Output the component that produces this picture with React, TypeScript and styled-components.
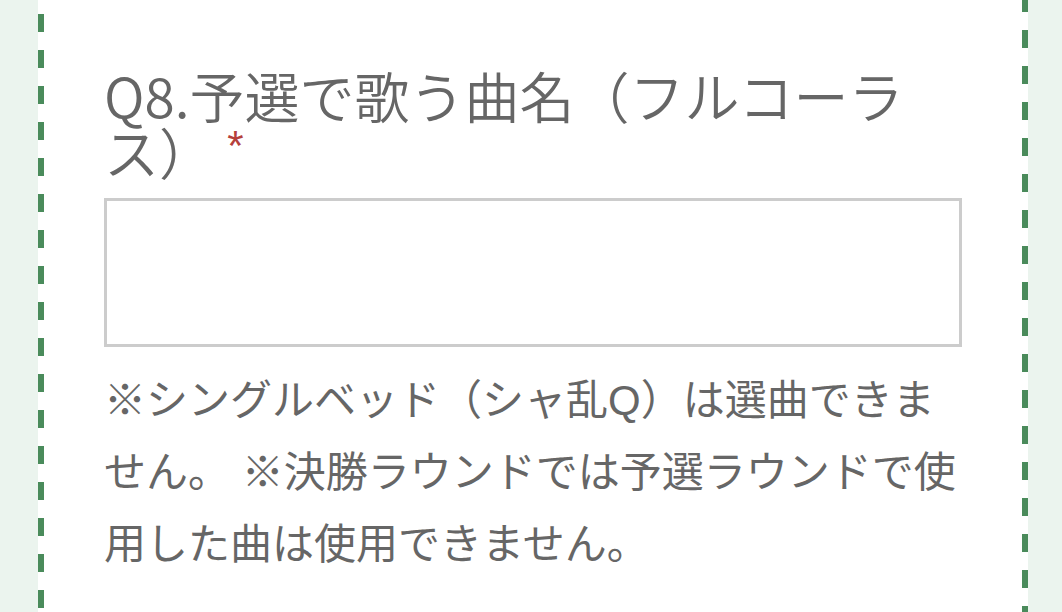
import React from "react";
import styled, { createGlobalStyle } from "styled-components";

const GlobalStyle = createGlobalStyle`
  html, body {
    margin: 0;
    padding: 0;
    background: #ffffff;
  }
  body {
    font-family: "Liberation Sans", "Noto Sans CJK JP", sans-serif;
    -webkit-font-smoothing: antialiased;
  }
`;

const Page = styled.div`
  display: flex;
  width: 1062px;
  height: 612px;
  overflow: hidden;
  background: #ffffff;
`;

const Gutter = styled.div<{ $width: number }>`
  flex: 0 0 ${(p) => p.$width}px;
  background: #ebf4ee;
`;

/* vertical dashed rule drawn as a repeating gradient so the dash phase is exact */
const Rail = styled.div<{ $offset: number }>`
  flex: 0 0 6px;
  background-image: repeating-linear-gradient(
    to bottom,
    #4a8b5b 0,
    #4a8b5b 18px,
    #ffffff 18px,
    #ffffff 36px
  );
  background-position: 0 ${(p) => p.$offset}px;
`;

const Card = styled.div`
  flex: 1 1 auto;
  display: flex;
  flex-direction: column;
  padding: 66px 60px 0 60px;
  background: #ffffff;
`;

const Question = styled.label`
  display: block;
  font-size: 55px;
  line-height: 56px;
  font-weight: 350;
  color: #666666;
  font-family: "Noto Sans CJK JP", sans-serif;
`;

const Required = styled.span`
  font-family: "Liberation Sans", sans-serif;
  font-size: 42px;
  line-height: 0;
  vertical-align: 14px;
  margin-left: 1px;
  color: #b5403c;
`;

const AnswerBox = styled.textarea`
  box-sizing: border-box;
  display: block;
  width: 100%;
  height: 149px;
  margin-top: 20px;
  border: 3px solid #cccccc;
  border-radius: 0;
  background: #ffffff;
  resize: none;
  outline: none;
  padding: 8px 12px;
  font-size: 42px;
  font-family: "Liberation Sans", "Noto Sans CJK JP", sans-serif;
`;

const Note = styled.p`
  margin: 18px 0 0 0;
  font-size: 42px;
  line-height: 72px;
  color: #666666;
  font-family: "Liberation Sans", "Noto Sans CJK JP", sans-serif;
`;

export default function App() {
  return (
    <>
      <GlobalStyle />
      <Page>
        <Gutter $width={38} />
        <Rail $offset={14} />
        <Card>
          <Question htmlFor="q8">
            Q8.予選で歌う曲名（フルコーラス） <Required>*</Required>
          </Question>
          <AnswerBox id="q8" />
          <Note>
            ※シングルベッド（シャ乱Q）は選曲できません。 ※決勝ラウンドでは予選ラウンドで使用した曲は使用できません。
          </Note>
        </Card>
        <Rail $offset={30} />
        <Gutter $width={34} />
      </Page>
    </>
  );
}
